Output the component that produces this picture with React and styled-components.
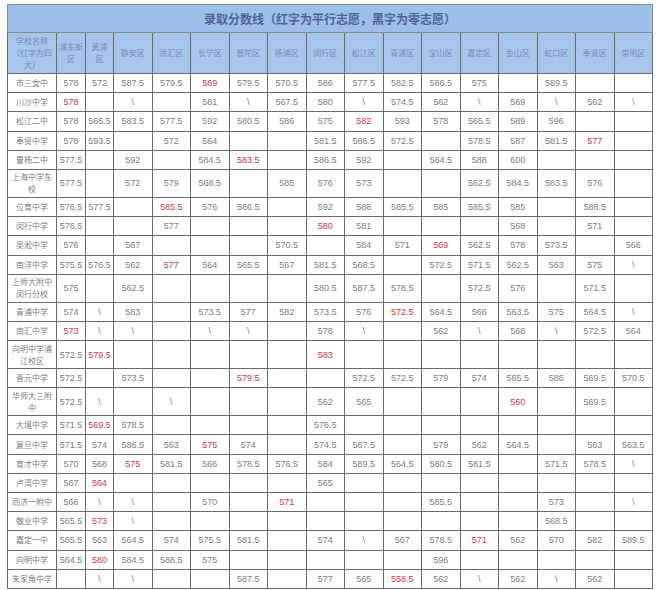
import React from 'react';
import styled, { createGlobalStyle } from 'styled-components';

const GlobalStyle = createGlobalStyle`
  html, body {
    margin: 0;
    padding: 0;
    background: #ffffff;
  }
  body {
    font-family: "Liberation Sans", "Noto Sans CJK SC", sans-serif;
  }
`;

const Page = styled.div`
  padding: 4px 0 0 7px;
`;

const Table = styled.table`
  width: 646px;
  table-layout: fixed;
  border-collapse: collapse;
  border: 1px solid #8c8c8c;
`;

const TitleCell = styled.th`
  height: 27px;
  background: #9cc0e8;
  color: #4d6792;
  font-family: "Noto Sans CJK SC", sans-serif;
  font-size: 12px;
  font-weight: 700;
  text-align: center;
  border: 1px solid #8c8c8c;
  padding: 0;
`;

const HeadCell = styled.th`
  height: 40px;
  background: #a6c6ec;
  color: #7b90b4;
  font-family: "Noto Sans CJK SC", sans-serif;
  font-size: 8px;
  font-weight: 400;
  line-height: 12px;
  text-align: center;
  border: 1px solid #6a6a6a;
  padding: 0 2px;
`;

const NameCell = styled.td`
  height: ${p => (p.$tall ? '27px' : '18.2px')};
  color: #7d7d7d;
  font-family: "Noto Sans CJK SC", sans-serif;
  font-size: 8px;
  line-height: 12px;
  text-align: center;
  border: 1px solid #6a6a6a;
  padding: 0 2px;
`;

const Cell = styled.td`
  color: ${p => (p.$red ? '#cc3848' : '#7d7d7d')};
  font-family: "Liberation Sans", sans-serif;
  font-size: 9px;
  text-align: center;
  border: 1px solid #6a6a6a;
  padding: 0;
  white-space: nowrap;
`;

const districts = [
  '浦东新区', '黄浦区', '静安区', '徐汇区', '长宁区', '普陀区', '杨浦区', '闵行区',
  '松江区', '青浦区', '宝山区', '嘉定区', '金山区', '虹口区', '奉贤区', '崇明区',
];

// 两行显示的学校
const tallNames = ['上海中学东校', '上师大附中闵行分校', '向明中学浦江校区', '华师大三附中'];

// "*" 开头表示红字（平行志愿）
const rows = [
  ['市三女中', '578', '572', '587.5', '579.5', '*569', '579.5', '570.5', '586', '577.5', '582.5', '586.5', '575', '', '589.5', '', ''],
  ['川沙中学', '*578', '', '\\', '', '581', '\\', '567.5', '580', '\\', '574.5', '562', '\\', '569', '\\', '562', '\\'],
  ['松江二中', '578', '565.5', '583.5', '577.5', '592', '580.5', '586', '575', '*582', '593', '578', '565.5', '589', '596', '', ''],
  ['奉贤中学', '578', '593.5', '', '572', '564', '', '', '581.5', '586.5', '572.5', '', '578.5', '587', '581.5', '*577', ''],
  ['曹杨二中', '577.5', '', '592', '', '584.5', '*583.5', '', '586.5', '592', '', '584.5', '588', '600', '', '', ''],
  ['上海中学东校', '577.5', '', '572', '579', '568.5', '', '585', '576', '573', '', '', '562.5', '584.5', '583.5', '576', ''],
  ['位育中学', '576.5', '577.5', '', '*585.5', '576', '586.5', '', '592', '588', '585.5', '585', '585.5', '585', '', '588.5', ''],
  ['闵行中学', '576.5', '', '', '577', '', '', '', '*580', '581', '', '', '', '568', '', '571', ''],
  ['吴淞中学', '576', '', '567', '', '', '', '570.5', '', '584', '571', '*569', '562.5', '578', '573.5', '', '566'],
  ['南洋中学', '575.5', '576.5', '562', '*577', '564', '565.5', '567', '581.5', '568.5', '', '572.5', '571.5', '562.5', '563', '575', '\\'],
  ['上师大附中闵行分校', '575', '', '562.5', '', '', '', '', '580.5', '587.5', '578.5', '', '572.5', '576', '', '571.5', ''],
  ['青浦中学', '574', '\\', '583', '', '573.5', '577', '582', '573.5', '576', '*572.5', '564.5', '566', '563.5', '575', '564.5', '\\'],
  ['南汇中学', '*573', '\\', '\\', '', '\\', '\\', '', '578', '\\', '', '562', '\\', '568', '\\', '572.5', '564'],
  ['向明中学浦江校区', '572.5', '*579.5', '', '', '', '', '', '*583', '', '', '', '', '', '', '', ''],
  ['晋元中学', '572.5', '', '573.5', '', '', '*579.5', '', '', '572.5', '572.5', '579', '574', '565.5', '586', '569.5', '570.5'],
  ['华师大三附中', '572.5', '\\', '', '\\', '', '', '', '562', '565', '', '', '', '*560', '', '569.5', ''],
  ['大境中学', '571.5', '*569.5', '578.5', '', '', '', '', '576.5', '', '', '', '', '', '', '', ''],
  ['复旦中学', '571.5', '574', '586.5', '563', '*575', '574', '', '574.5', '567.5', '', '579', '562', '564.5', '', '563', '563.5'],
  ['育才中学', '570', '568', '*575', '581.5', '566', '578.5', '576.5', '584', '589.5', '564.5', '580.5', '581.5', '', '571.5', '578.5', '\\'],
  ['卢湾中学', '567', '*564', '', '', '', '', '', '565', '', '', '', '', '', '', '', ''],
  ['同济一附中', '566', '\\', '\\', '', '570', '', '*571', '', '', '', '585.5', '', '', '573', '', '\\'],
  ['敬业中学', '565.5', '*573', '\\', '', '', '', '', '', '', '', '', '', '', '568.5', '', ''],
  ['嘉定一中', '565.5', '563', '564.5', '574', '575.5', '581.5', '', '574', '\\', '567', '578.5', '*571', '562', '570', '582', '589.5'],
  ['向明中学', '564.5', '*580', '584.5', '588.5', '575', '', '', '', '', '', '596', '', '', '', '', ''],
  ['朱家角中学', '', '\\', '\\', '', '', '587.5', '', '577', '565', '*558.5', '562', '\\', '562', '\\', '562', ''],
];

const ScoreCell = ({ value }) => {
  const red = value.startsWith('*');
  return <Cell $red={red}>{red ? value.slice(1) : value}</Cell>;
};

export default function App() {
  return (
    <Page>
      <GlobalStyle />
      <Table>
        <colgroup>
          <col style={{ width: 49 }} />
          <col style={{ width: 29 }} />
          <col style={{ width: 28 }} />
          {districts.slice(2).map(d => <col key={d} />)}
        </colgroup>
        <thead>
          <tr>
            <TitleCell colSpan={17}>录取分数线（红字为平行志愿，黑字为零志愿）</TitleCell>
          </tr>
          <tr>
            <HeadCell>学校名称<br />（红字为四<br />大）</HeadCell>
            {districts.map(d => <HeadCell key={d}>{d}</HeadCell>)}
          </tr>
        </thead>
        <tbody>
          {rows.map(([name, ...scores]) => (
            <tr key={name}>
              <NameCell $tall={tallNames.includes(name)}>{name}</NameCell>
              {scores.map((s, i) => <ScoreCell key={i} value={s} />)}
            </tr>
          ))}
        </tbody>
      </Table>
    </Page>
  );
}
